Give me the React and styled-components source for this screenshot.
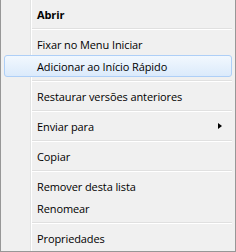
import styled, { createGlobalStyle } from "styled-components";

const GlobalStyle = createGlobalStyle`
  html, body {
    margin: 0;
    padding: 0;
    background: #f0f0f0;
  }
`;

const Menu = styled.div`
  position: relative;
  width: 236px;
  height: 252px;
  box-sizing: border-box;
  border: 1px solid #979797;
  border-top: none;
  background: #f0f0f0;
  padding: 3px 2px 2px 2px;
  font-family: "Segoe UI", "Open Sans", "Noto Sans", sans-serif;
  font-size: 11px;
  letter-spacing: -0.1px;
  color: #000;
  display: flex;
  flex-direction: column;
  overflow: hidden;
`;

const Gutter = styled.div`
  position: absolute;
  top: 0;
  bottom: 0;
  left: 29px;
  width: 1px;
  background: #e2e3e3;
  border-right: 1px solid #ffffff;
`;

const Item = styled.div`
  position: relative;
  height: 22px;
  box-sizing: border-box;
  display: flex;
  align-items: center;
  padding-left: 32px;
  margin: 0 1px;
  border: 1px solid transparent;
  border-radius: 3px;
  font-weight: ${({ $bold }) => ($bold ? 700 : 400)};
  white-space: nowrap;
  ${({ $active }) =>
    $active &&
    `
    border-color: #aecff7;
    background: linear-gradient(to bottom, #f2f8fe, #dbeafb);
  `}
`;

const Separator = styled.div`
  height: 8px;
  display: flex;
  align-items: center;
  padding-left: 29px;
  padding-right: 1px;

  &::before {
    content: "";
    flex: 1;
    height: 1px;
    background: #e0e0e0;
    border-bottom: 1px solid #ffffff;
  }
`;

const Arrow = styled.span`
  position: absolute;
  right: 9px;
  top: 7px;
  width: 0;
  height: 0;
  border-top: 3.5px solid transparent;
  border-bottom: 3.5px solid transparent;
  border-left: 4px solid #000;
`;

const entries = [
  { label: "Abrir", bold: true },
  "sep",
  { label: "Fixar no Menu Iniciar" },
  { label: "Adicionar ao Início Rápido", active: true },
  "sep",
  { label: "Restaurar versões anteriores" },
  "sep",
  { label: "Enviar para", submenu: true },
  "sep",
  { label: "Copiar" },
  "sep",
  { label: "Remover desta lista" },
  { label: "Renomear" },
  "sep",
  { label: "Propriedades" },
];

export default function App() {
  return (
    <>
      <GlobalStyle />
      <Menu>
        <Gutter />
        {entries.map((e, i) =>
          e === "sep" ? (
            <Separator key={i} />
          ) : (
            <Item key={i} $bold={e.bold} $active={e.active}>
              {e.label}
              {e.submenu && <Arrow />}
            </Item>
          )
        )}
      </Menu>
    </>
  );
}
